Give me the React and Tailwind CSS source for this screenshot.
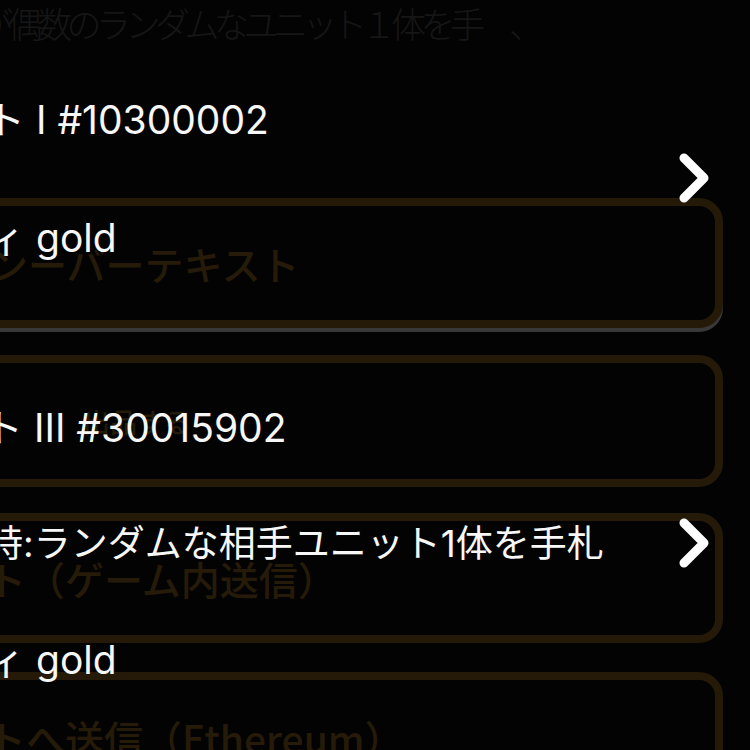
import React from "react";

const goldBox =
  "flex items-center h-[130px] w-[753px] -ml-[30px] rounded-[24px] border-[8px] border-[#241a07] bg-[#030303]";
const goldText =
  "text-[39px] leading-none font-medium text-[#251b08] whitespace-nowrap";

function Chevron() {
  return (
    <svg width="34" height="52" viewBox="0 0 34 52" fill="none">
      <polyline
        points="7,6 27,26 7,46"
        stroke="#ffffff"
        strokeWidth="9"
        strokeLinecap="round"
        strokeLinejoin="round"
      />
    </svg>
  );
}

function Row({ h, shift, children }) {
  return (
    <div className={`flex items-center ${h}`}>
      <span className={`${shift} whitespace-nowrap`}>{children}</span>
    </div>
  );
}

export default function App() {
  return (
    <div
      className="relative w-[750px] h-[750px] overflow-hidden bg-[#030303]"
      style={{ fontFamily: '"Noto Sans CJK JP", "Noto Sans", sans-serif' }}
    >
      {/* back layer: faded list of gold buttons */}
      <div className="flex flex-col">
        <div className="h-[44px] flex items-center">
          <span className="-ml-[22px] text-[35px] leading-none font-light tracking-[-5.5px] text-[#161616] whitespace-nowrap">
            が偶数のランダムなユニット１体を手　、
          </span>
        </div>

        <div className={`${goldBox} mt-[154px] shadow-[0_4px_0_#383838]`}>
          <span className={`${goldText} ml-[11px]`}>ンーバーテキスト</span>
        </div>

        <div className={`${goldBox} mt-[27px] h-[132px]`}>
          <span className="ml-[105px] text-[27px] leading-none font-medium text-[#241b08] whitespace-nowrap">
            出品する
          </span>
        </div>

        <div className={`${goldBox} mt-[26px]`}>
          <span className={`${goldText} ml-[9px]`}>ト（ゲーム内送信）</span>
        </div>

        <div className={`${goldBox} mt-[29px]`}>
          <span className={`${goldText} ml-[9px]`}>トへ送信（Ethereum）</span>
        </div>
      </div>

      {/* front layer: unit details fading in */}
      <div
        className="absolute inset-0 flex flex-col text-[39px] leading-none text-[#f7f7f7]"
        style={{ fontFamily: 'Inter, "Noto Sans CJK JP", sans-serif' }}
      >
        <div className="flex items-center mt-[60px] pr-[39px]">
          <div className="flex flex-col flex-1">
            <Row h="h-[118px]" shift="-ml-[14px]">ト I #10300002</Row>
            <Row h="h-[118px]" shift="-ml-[14px]">ィ gold</Row>
          </div>
          <Chevron />
        </div>

        <div className="flex items-center mt-[73px] pr-[39px]">
          <div className="flex flex-col flex-1">
            <Row h="h-[116px]" shift="-ml-[16px]">ト III #30015902</Row>
            <Row h="h-[116px]" shift="-ml-[14px] text-[37px]">時:ランダムな相手ユニット1体を手札</Row>
            <Row h="h-[116px]" shift="-ml-[14px]">ィ gold</Row>
          </div>
          <Chevron />
        </div>
      </div>
    </div>
  );
}
